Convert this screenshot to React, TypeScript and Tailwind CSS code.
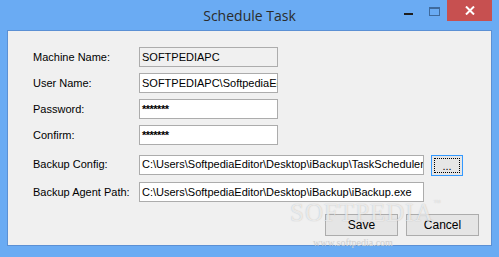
import { ReactNode } from 'react';

// Schedule Task dialog (Windows 8 style frame)

const field = 'h-[20px] border border-[#acacac] flex items-center px-[2px] overflow-hidden whitespace-nowrap';

function Row({ label, children, className = '' }: { label: string; children: ReactNode; className?: string }) {
  return (
    <div className={`flex items-center ${className}`}>
      <div className="w-[106px] shrink-0 text-[#000]">{label}</div>
      {children}
    </div>
  );
}

export default function App() {
  return (
    <div className="w-[499px] h-[257px] bg-[#6aabf3] flex flex-col overflow-hidden">
      {/* title bar */}
      <div className="relative h-[30px] shrink-0">
        <div
          className="pt-[5px] text-center text-[14px] text-[#2b2b2b]"
          style={{ fontFamily: '"Open Sans", "Noto Sans", sans-serif' }}
        >
          Schedule Task
        </div>
        <div className="absolute top-0 right-[7px] flex items-start">
          <div className="w-[26px] h-[21px] flex items-center justify-center pt-[6px]">
            <div className="w-[9px] h-[2px] bg-[#1e1e1e]" />
          </div>
          <div className="w-[26px] h-[21px] flex items-start justify-center pt-[7px]">
            <div className="w-[11px] h-[9px] border border-t-2 border-[#3f6a9c]" />
          </div>
          <div className="w-[45px] h-[21px] bg-[#c75050] flex items-center justify-center">
            <svg width="10" height="9" viewBox="0 0 10 9">
              <path d="M1 0.5 L9 8.5 M9 0.5 L1 8.5" stroke="#fff" strokeWidth="2" />
            </svg>
          </div>
        </div>
      </div>

      {/* client area */}
      <div
        className="relative mx-[7px] h-[216px] shrink-0 bg-[#f0f0f0] border border-[#5b90d4] pl-[25px] pr-[12px] pt-[16px] text-[11px] text-black"
        style={{ fontFamily: '"Liberation Sans", Arial, sans-serif' }}
      >
        <div className="flex flex-col gap-[6px]">
          <Row label="Machine Name:">
            <div className={`${field} w-[139px] bg-[#f0f0f0]`}>SOFTPEDIAPC</div>
          </Row>
          <Row label="User Name:">
            <div className={`${field} w-[139px] bg-white`}>SOFTPEDIAPC\SoftpediaEditor</div>
          </Row>
          <Row label="Password:">
            <div className={`${field} w-[139px] bg-white items-start pt-[1px] font-bold tracking-[-0.5px]`}>*******</div>
          </Row>
          <Row label="Confirm:">
            <div className={`${field} w-[139px] bg-white items-start pt-[1px] font-bold tracking-[-0.5px]`}>*******</div>
          </Row>
          <Row label="Backup Config:" className="mt-[2px]">
            <div className={`${field} w-[285px] bg-white`}>
              C:\Users\SoftpediaEditor\Desktop\iBackup\TaskScheduler.xml
            </div>
            <div className="ml-[7px] w-[32px] h-[21px] mt-[2px] border border-[#3399ff] bg-[#e6e6e6] p-[2px]">
              <div className="w-full h-full border border-dotted border-black flex items-end justify-center leading-[11px]">
                ...
              </div>
            </div>
          </Row>
          <Row label="Backup Agent Path:">
            <div className={`${field} w-[285px] bg-white`}>
              C:\Users\SoftpediaEditor\Desktop\iBackup\iBackup.exe
            </div>
          </Row>
        </div>

        <div className="mt-[12px] flex justify-end gap-[8px] text-[12px]">
          <div className="w-[73px] h-[22px] border border-[#acacac] bg-[#e5e5e5] flex items-center justify-center">
            Save
          </div>
          <div className="w-[73px] h-[22px] border border-[#acacac] bg-[#e5e5e5] flex items-center justify-center">
            Cancel
          </div>
        </div>

        {/* watermark */}
        <div
          className="absolute left-[282px] top-[169px] pointer-events-none text-[25px] leading-none tracking-[1px] text-white/70 [text-shadow:0_0_1px_rgba(120,120,120,0.5)]"
          style={{ fontFamily: '"Liberation Serif", serif' }}
        >
          SOFTPEDIA<span className="text-[7px] align-top">™</span>
        </div>
        <div
          className="absolute left-[305px] top-[204px] pointer-events-none text-[10px] text-[#cfcfcf]"
          style={{ fontFamily: '"Liberation Serif", serif' }}
        >
          www.softpedia.com
        </div>
      </div>
      <div className="flex-1" />
    </div>
  );
}
